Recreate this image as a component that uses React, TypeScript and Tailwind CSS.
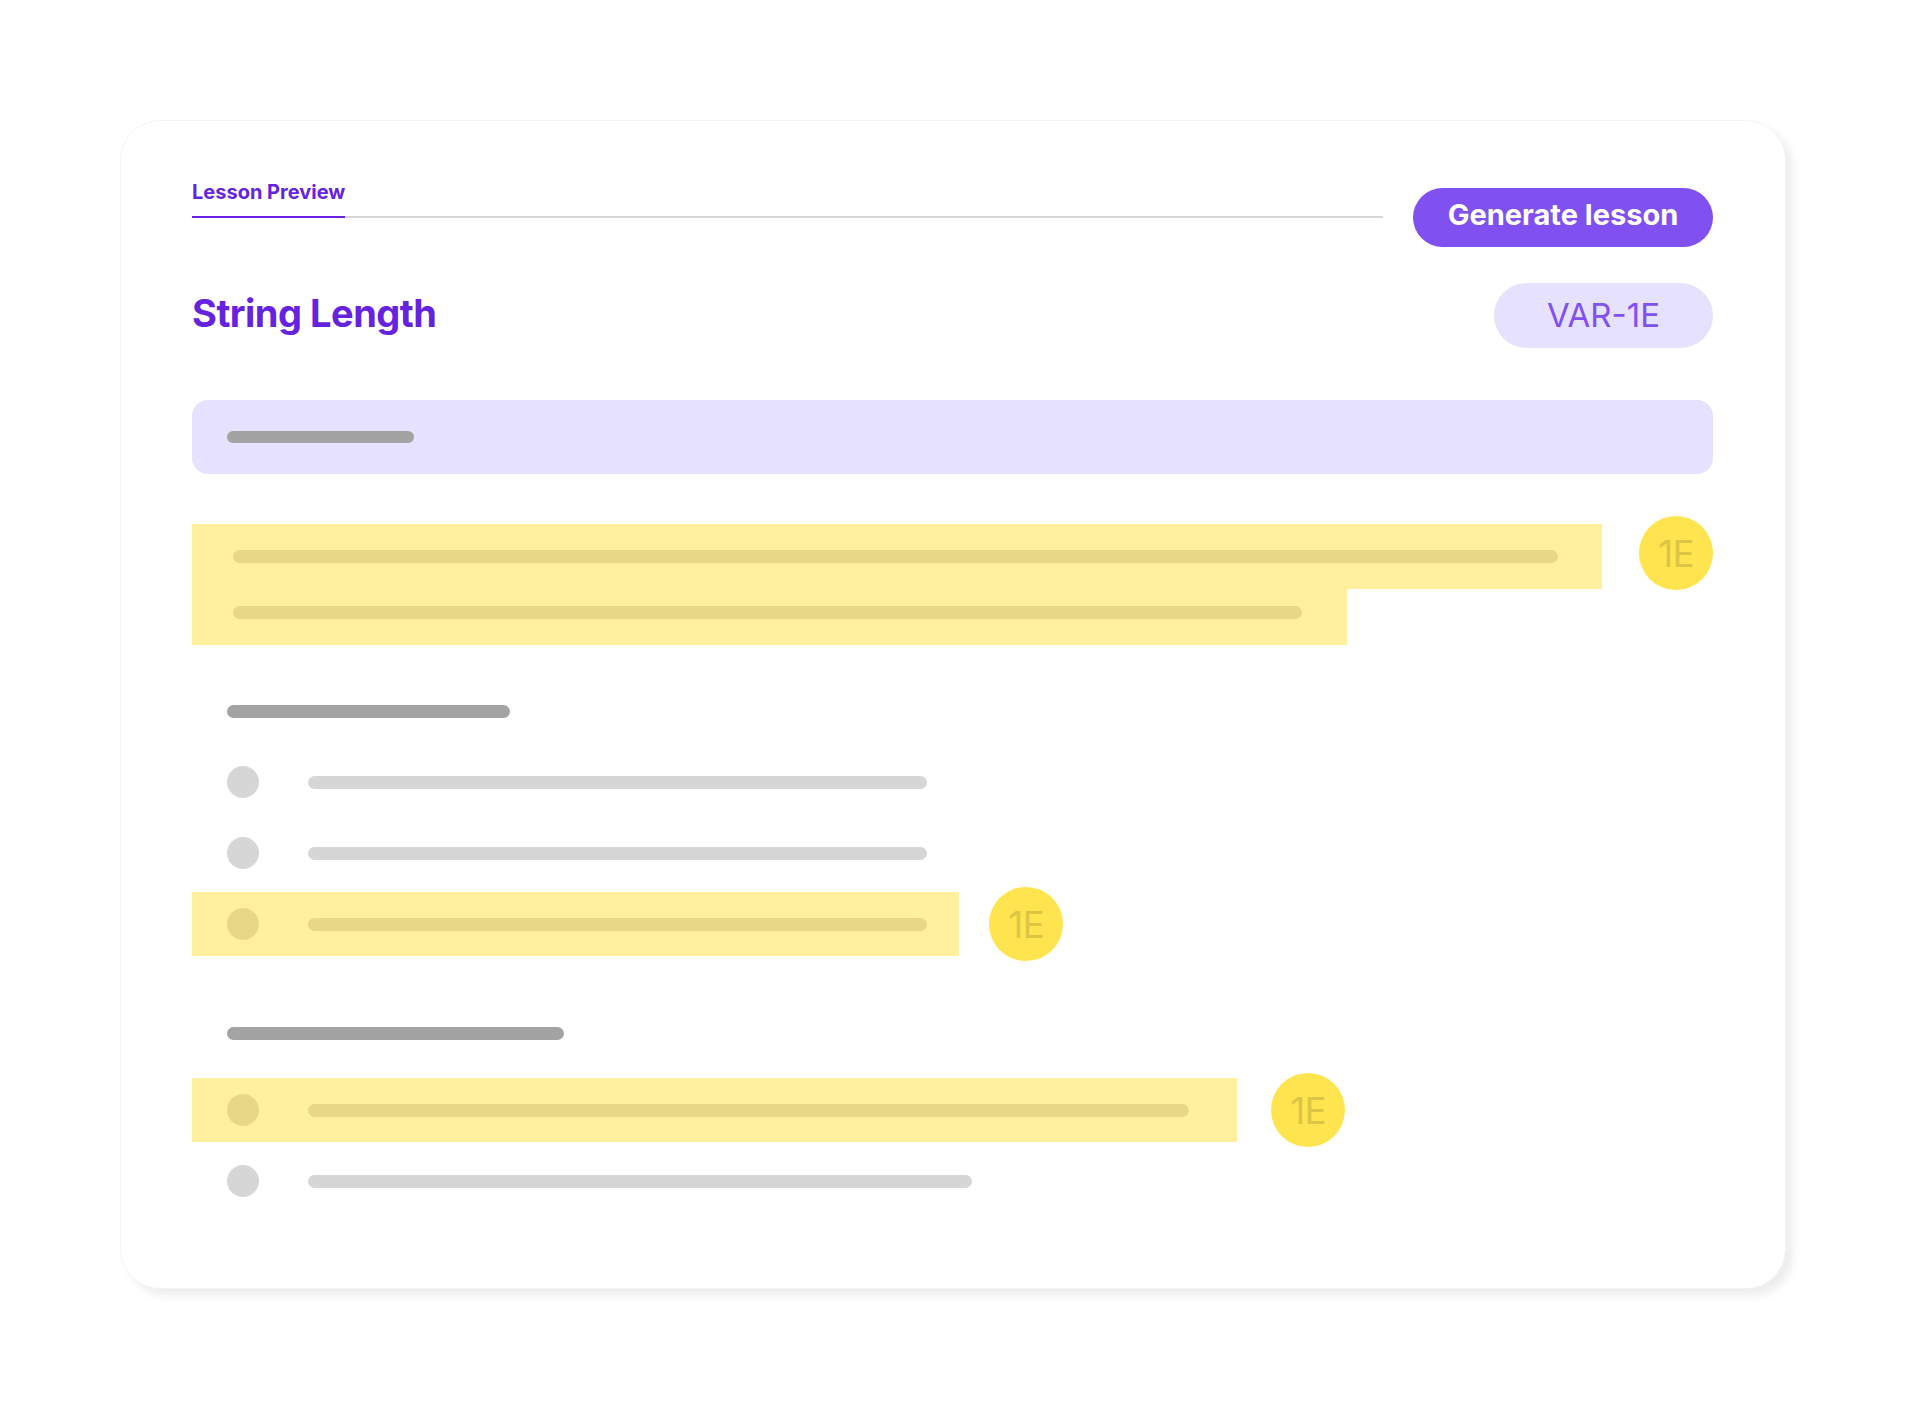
import React from "react";

const PURPLE = "text-[#6523e0]";

function Badge() {
  return (
    <div className="flex h-[74px] w-[74px] shrink-0 items-center justify-center rounded-full bg-[#fee550]">
      <span className="text-[37px] font-normal leading-none tracking-[-1px] text-[#dcc545]">1E</span>
    </div>
  );
}

function Row({
  highlight,
  lineW,
  rowW,
}: {
  highlight?: boolean;
  lineW: number;
  rowW?: number;
}) {
  const circle = highlight ? "bg-[#e8d886]" : "bg-[#d6d6d6]";
  const line = highlight ? "bg-[#e8d886]" : "bg-[#d6d6d6]";
  return (
    <div
      className={`flex h-[64px] shrink-0 items-center pl-[35px] ${highlight ? "bg-[#fef09d]" : ""}`}
      style={rowW ? { width: rowW } : undefined}
    >
      <div className={`h-[32px] w-[32px] shrink-0 rounded-full ${circle}`} />
      <div className={`ml-[49px] h-[13px] rounded-full ${line}`} style={{ width: lineW }} />
    </div>
  );
}

export default function App() {
  return (
    <div
      className="min-h-[1408px] w-[1920px] bg-white pt-[120px]"
      style={{ fontFamily: "Inter, 'Noto Sans', sans-serif" }}
    >
      <div className="ml-[120px] h-[1169px] w-[1666px] rounded-[40px] border border-[#f4f4f4] bg-white pl-[71px] pr-[72px] pt-[59px] shadow-[7px_7px_8px_rgba(0,0,0,0.07)]">
        {/* Header */}
        <div className="flex items-start">
          <div className="mr-[30px] flex flex-1 border-b-2 border-[#d6d6d6]">
            <div className={`-mb-[2px] border-b-2 border-[#6523e0] pb-[12px] text-[20px] font-bold leading-[24px] ${PURPLE}`}>
              Lesson Preview
            </div>
          </div>
          <button className="mt-[8px] flex h-[59px] w-[300px] items-center justify-center rounded-full bg-[#8050f0] pb-[6px] text-[29px] font-bold leading-none text-white">
            Generate lesson
          </button>
        </div>

        {/* Title row */}
        <div className="mt-[36px] flex items-center justify-between">
          <h1 className={`mb-[6px] text-[38px] font-bold leading-none tracking-[-0.5px] ${PURPLE}`}>String Length</h1>
          <div className="flex h-[65px] w-[219px] items-center justify-center rounded-full bg-[#e6e1fd] text-[33px] font-normal leading-none text-[#8050f0]">
            VAR-1E
          </div>
        </div>

        {/* Purple bar */}
        <div className="mt-[52px] flex h-[74px] items-center rounded-[16px] bg-[#e6e1fe] pl-[35px]">
          <div className="h-[12px] w-[187px] rounded-full bg-[#a3a3a3]" />
        </div>

        {/* Highlighted paragraph */}
        <div className="mt-[50px] flex items-start justify-between">
          <div className="flex flex-col">
            <div className="h-[65px] w-[1410px] bg-[#fef09d] pl-[41px] pt-[26px]">
              <div className="h-[13px] w-[1325px] rounded-full bg-[#e8d886]" />
            </div>
            <div className="h-[56px] w-[1155px] bg-[#fef09d] pl-[41px] pt-[17px]">
              <div className="h-[13px] w-[1069px] rounded-full bg-[#e8d886]" />
            </div>
          </div>
          <div className="-mt-[8px]">
            <Badge />
          </div>
        </div>

        {/* Section 1 */}
        <div className="ml-[35px] mt-[60px] h-[13px] w-[283px] rounded-full bg-[#a3a3a3]" />
        <div className="mt-[32px] flex flex-col gap-[7px]">
          <Row lineW={619} />
          <Row lineW={619} />
          <div className="flex h-[64px] items-center gap-[30px]">
            <Row highlight lineW={619} rowW={767} />
            <Badge />
          </div>
        </div>

        {/* Section 2 */}
        <div className="ml-[35px] mt-[71px] h-[13px] w-[337px] rounded-full bg-[#a3a3a3]" />
        <div className="mt-[38px] flex flex-col gap-[7px]">
          <div className="flex h-[64px] items-center gap-[34px]">
            <Row highlight lineW={881} rowW={1045} />
            <Badge />
          </div>
          <Row lineW={664} />
        </div>
      </div>
    </div>
  );
}
